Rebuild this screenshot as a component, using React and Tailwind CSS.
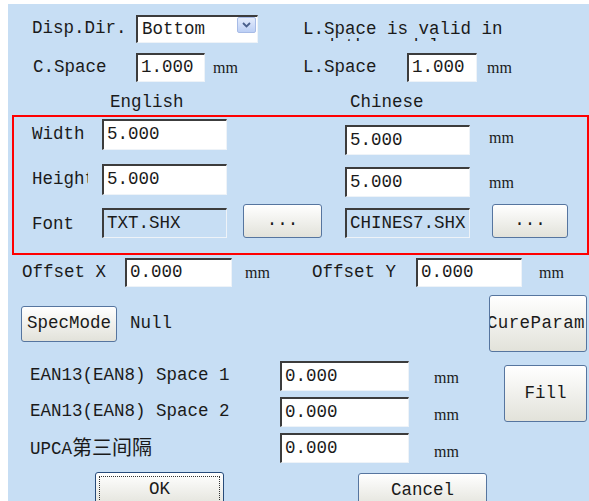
import React from "react";

function Field({ className = "", value, ro = false }) {
  return (
    <div
      className={`${className} shrink-0 flex items-center pl-[3px] border-t-2 border-l-2 border-t-[#3c3c3c] border-l-[#3c3c3c] border-b border-r border-b-[#eef3f8] border-r-[#eef3f8] leading-none whitespace-nowrap overflow-hidden ${
        ro ? "bg-[#c7def4]" : "bg-white"
      }`}
    >
      {value}
    </div>
  );
}

function Btn({ className = "", children }) {
  return (
    <button
      type="button"
      className={`${className} shrink-0 flex items-center justify-center rounded-[3px] border border-[#56759f] bg-linear-to-b from-white to-[#e2e2da] leading-none whitespace-nowrap overflow-hidden text-[#1a1a1a]`}
    >
      {children}
    </button>
  );
}

function MM({ className = "" }) {
  return (
    <div className={`${className} shrink-0 flex items-center font-['Liberation_Serif',serif] text-[16px] leading-none`}>
      mm
    </div>
  );
}

function Dropdown() {
  return (
    <div className="shrink-0 w-[122px] h-[28px] flex bg-white border-t-2 border-l-2 border-t-[#3c3c3c] border-l-[#3c3c3c] border-b border-r border-b-[#eef3f8] border-r-[#eef3f8]">
      <div className="flex-1 flex items-center pl-[4px] leading-none">Bottom</div>
      <div className="mt-0 mr-[1px] w-[19px] h-[16px] rounded-[2px] border border-[#a7bbe6] bg-linear-to-b from-[#e4ecfc] to-[#bccff5] flex items-center justify-center">
        <svg width="9" height="6" viewBox="0 0 9 6">
          <path d="M1 1 L4.5 4.5 L8 1" fill="none" stroke="#4a5f8c" strokeWidth="1.8" />
        </svg>
      </div>
    </div>
  );
}

export default function App() {
  return (
    <div className="w-[589px] h-[501px] bg-white pl-[8px] pt-[4px] overflow-hidden font-['Liberation_Mono','Noto_Sans_CJK_SC',monospace] text-[17.5px] text-[#1a1a1a]">
      <div className="w-[581px] h-[497px] bg-[#c7def4] flex flex-col overflow-hidden">
        {/* Row 1 */}
        <div className="flex h-[28px] mt-[11px] shrink-0">
          <div className="ml-[24px] w-[104px] shrink-0 flex items-center leading-none">Disp.Dir.</div>
          <Dropdown />
          <div className="ml-[45px] mt-[6px] h-[20px] overflow-hidden leading-[17px] whitespace-nowrap">
            L.Space is valid in
            <br />
            and the model
          </div>
        </div>

        {/* Row 2 */}
        <div className="flex h-[29px] mt-[10px] shrink-0">
          <div className="ml-[25px] w-[103px] shrink-0 flex items-center leading-none">C.Space</div>
          <Field className="w-[69px] h-[29px]" value="1.000" />
          <MM className="ml-[8px] w-[90px] h-[29px]" />
          <div className="w-[104px] shrink-0 flex items-center leading-none">L.Space</div>
          <Field className="w-[70px] h-[29px]" value="1.000" />
          <MM className="ml-[10px] h-[29px]" />
        </div>

        {/* Row 3 */}
        <div className="flex h-[22px] mt-[10px] shrink-0 items-center leading-none">
          <div className="ml-[102px] w-[240px] shrink-0">English</div>
          <div>Chinese</div>
        </div>

        {/* Red box */}
        <div className="ml-[4px] mt-[1px] w-[577px] h-[140px] shrink-0 border-2 border-[#ff0000] flex flex-col">
          {/* Width */}
          <div className="flex h-[45px] shrink-0">
            <div className="ml-[18px] mt-[2px] w-[70px] h-[31px] shrink-0 flex items-center leading-none">Width</div>
            <Field className="mt-[2px] w-[125px] h-[31px]" value="5.000" />
            <Field className="ml-[118px] mt-[8px] w-[125px] h-[30px]" value="5.000" />
            <MM className="ml-[19px] mt-[13px] h-[16px]" />
          </div>
          {/* Height */}
          <div className="flex h-[42px] shrink-0">
            <div className="ml-[18px] mt-[2px] w-[56px] h-[31px] shrink-0 flex items-center leading-none overflow-hidden whitespace-nowrap">
              Height
            </div>
            <Field className="ml-[14px] mt-[2px] w-[125px] h-[31px]" value="5.000" />
            <Field className="ml-[118px] mt-[5px] w-[125px] h-[30px]" value="5.000" />
            <MM className="ml-[19px] mt-[13px] h-[16px]" />
          </div>
          {/* Font */}
          <div className="flex h-[35px] shrink-0">
            <div className="ml-[18px] mt-[6px] w-[70px] h-[30px] shrink-0 flex items-center leading-none">Font</div>
            <Field className="mt-[4px] w-[125px] h-[30px]" value="TXT.SHX" ro />
            <Btn className="ml-[16px] w-[79px] h-[34px]">...</Btn>
            <Field className="ml-[23px] mt-[4px] w-[125px] h-[30px]" value="CHINES7.SHX" ro />
            <Btn className="ml-[22px] w-[76px] h-[34px]">...</Btn>
          </div>
        </div>

        {/* Offset row */}
        <div className="flex h-[29px] mt-[3px] shrink-0">
          <div className="ml-[14px] w-[103px] shrink-0 flex items-center leading-none">Offset X</div>
          <Field className="w-[107px] h-[29px]" value="0.000" />
          <MM className="ml-[13px] w-[67px] h-[29px]" />
          <div className="w-[104px] shrink-0 flex items-center leading-none">Offset Y</div>
          <Field className="w-[106px] h-[29px]" value="0.000" />
          <MM className="ml-[17px] h-[29px]" />
        </div>

        {/* SpecMode row */}
        <div className="flex h-[57px] mt-[8px] shrink-0 items-center">
          <Btn className="ml-[13px] w-[96px] h-[36px]">SpecMode</Btn>
          <div className="ml-[13px] leading-none">Null</div>
          <Btn className="ml-auto mr-[2px] w-[98px] h-[57px] !justify-end pr-[1px]">
            <span className="tracking-[0.4px]">CureParam</span>
          </Btn>
        </div>

        {/* EAN section */}
        <div className="flex mt-[9px] shrink-0">
          <div className="flex flex-col">
            <div className="flex h-[36px]">
              <div className="ml-[22px] w-[250px] h-[30px] shrink-0 flex items-center leading-none whitespace-nowrap">EAN13(EAN8) Space 1</div>
              <Field className="w-[129px] h-[30px]" value="0.000" />
              <MM className="ml-[25px] mt-[2px] h-[30px]" />
            </div>
            <div className="flex h-[36px]">
              <div className="ml-[22px] w-[250px] h-[30px] shrink-0 flex items-center leading-none whitespace-nowrap">EAN13(EAN8) Space 2</div>
              <Field className="w-[129px] h-[30px]" value="0.000" />
              <MM className="ml-[25px] mt-[3px] h-[30px]" />
            </div>
            <div className="flex h-[36px]">
              <div className="ml-[22px] mt-[2px] w-[250px] h-[30px] shrink-0 flex items-center leading-none whitespace-nowrap">
                UPCA<span className="text-[20px]">第三间隔</span>
              </div>
              <Field className="w-[129px] h-[30px]" value="0.000" />
              <MM className="ml-[25px] mt-[4px] h-[30px]" />
            </div>
          </div>
          <Btn className="ml-auto mr-[2px] mt-[4px] w-[83px] h-[57px]">Fill</Btn>
        </div>

        {/* Bottom buttons */}
        <div className="flex mt-[3px] shrink-0">
          <button
            type="button"
            className="ml-[87px] w-[129px] h-[36px] shrink-0 rounded-[3px] border border-[#274b7a] bg-linear-to-b from-white to-[#e2e2da] p-[3px]"
          >
            <div className="w-full h-full border border-dotted border-[#333] flex items-center justify-center leading-none">OK</div>
          </button>
          <Btn className="ml-[134px] mt-[1px] w-[129px] h-[36px]">Cancel</Btn>
        </div>
      </div>
    </div>
  );
}
